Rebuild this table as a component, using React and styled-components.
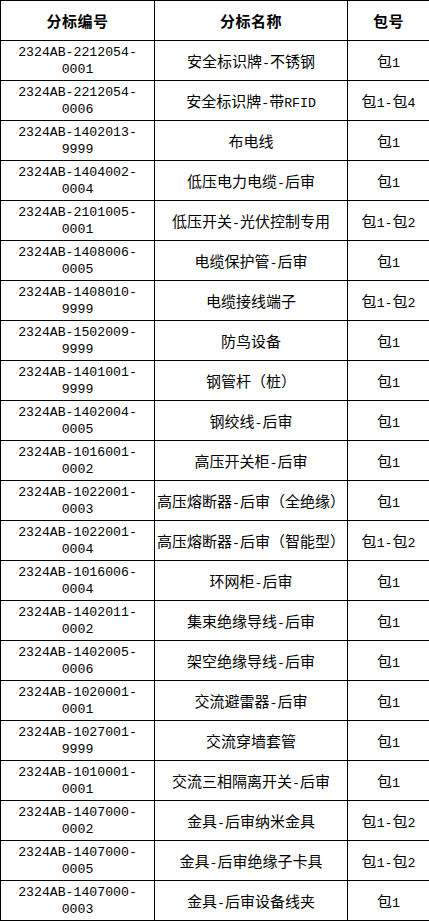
import React from "react";
import styled, { createGlobalStyle } from "styled-components";

const GlobalStyle = createGlobalStyle`
  html, body {
    margin: 0;
    padding: 0;
    background: #ffffff;
  }
  body {
    font-family: "Noto Sans CJK SC", "DejaVu Sans", sans-serif;
    color: #000000;
  }
`;

const Table = styled.table`
  width: 429px;
  table-layout: fixed;
  border-collapse: collapse;
  font-family: "Noto Sans CJK SC", sans-serif;
  font-size: 15px;
`;

const Col = styled.col`
  width: ${(p) => p.$w}px;
`;

const HeadCell = styled.th`
  height: 39px;
  padding: 0;
  border: 1px solid #000000;
  font-weight: 700;
  font-size: 15px;
  text-align: center;
  vertical-align: middle;
  letter-spacing: 0.5px;
`;

const Cell = styled.td`
  height: 39px;
  padding: 0;
  border: 1px solid #000000;
  text-align: center;
  vertical-align: middle;
  white-space: nowrap;
  font-weight: 400;
`;

const CodeLine = styled.div`
  text-align: center;
  font-family: "Liberation Mono", "DejaVu Sans Mono", monospace;
  font-size: 13.2px;
  line-height: 17px;
`;

const Latin = styled.span`
  font-family: "Liberation Mono", "DejaVu Sans Mono", monospace;
  font-size: 13.2px;
`;

const rows = [
  ["2324AB-2212054-0001", "安全标识牌-不锈钢", "包1"],
  ["2324AB-2212054-0006", "安全标识牌-带RFID", "包1-包4"],
  ["2324AB-1402013-9999", "布电线", "包1"],
  ["2324AB-1404002-0004", "低压电力电缆-后审", "包1"],
  ["2324AB-2101005-0001", "低压开关-光伏控制专用", "包1-包2"],
  ["2324AB-1408006-0005", "电缆保护管-后审", "包1"],
  ["2324AB-1408010-9999", "电缆接线端子", "包1-包2"],
  ["2324AB-1502009-9999", "防鸟设备", "包1"],
  ["2324AB-1401001-9999", "钢管杆（桩）", "包1"],
  ["2324AB-1402004-0005", "钢绞线-后审", "包1"],
  ["2324AB-1016001-0002", "高压开关柜-后审", "包1"],
  ["2324AB-1022001-0003", "高压熔断器-后审（全绝缘）", "包1"],
  ["2324AB-1022001-0004", "高压熔断器-后审（智能型）", "包1-包2"],
  ["2324AB-1016006-0004", "环网柜-后审", "包1"],
  ["2324AB-1402011-0002", "集束绝缘导线-后审", "包1"],
  ["2324AB-1402005-0006", "架空绝缘导线-后审", "包1"],
  ["2324AB-1020001-0001", "交流避雷器-后审", "包1"],
  ["2324AB-1027001-9999", "交流穿墙套管", "包1"],
  ["2324AB-1010001-0001", "交流三相隔离开关-后审", "包1"],
  ["2324AB-1407000-0002", "金具-后审纳米金具", "包1-包2"],
  ["2324AB-1407000-0005", "金具-后审绝缘子卡具", "包1-包2"],
  ["2324AB-1407000-0003", "金具-后审设备线夹", "包1"],
];

// ascii runs get the narrower mono face, like the original page
const Mixed = ({ text }) =>
  text
    .split(/([\x00-\x7f]+)/)
    .filter(Boolean)
    .map((part, i) =>
      /^[\x00-\x7f]+$/.test(part) ? <Latin key={i}>{part}</Latin> : part
    );

const App = () => {
  return (
    <>
      <GlobalStyle />
      <Table>
        <colgroup>
          <Col $w={154} />
          <Col $w={193} />
          <Col $w={82} />
        </colgroup>
        <thead>
          <tr>
            <HeadCell>分标编号</HeadCell>
            <HeadCell>分标名称</HeadCell>
            <HeadCell>包号</HeadCell>
          </tr>
        </thead>
        <tbody>
          {rows.map(([code, name, pkg], index) => (
            <tr key={index}>
              <Cell>
                <CodeLine>{code.slice(0, 15)}</CodeLine>
                <CodeLine>{code.slice(15)}</CodeLine>
              </Cell>
              <Cell>
                <Mixed text={name} />
              </Cell>
              <Cell>
                <Mixed text={pkg} />
              </Cell>
            </tr>
          ))}
        </tbody>
      </Table>
    </>
  );
};

export default App;
